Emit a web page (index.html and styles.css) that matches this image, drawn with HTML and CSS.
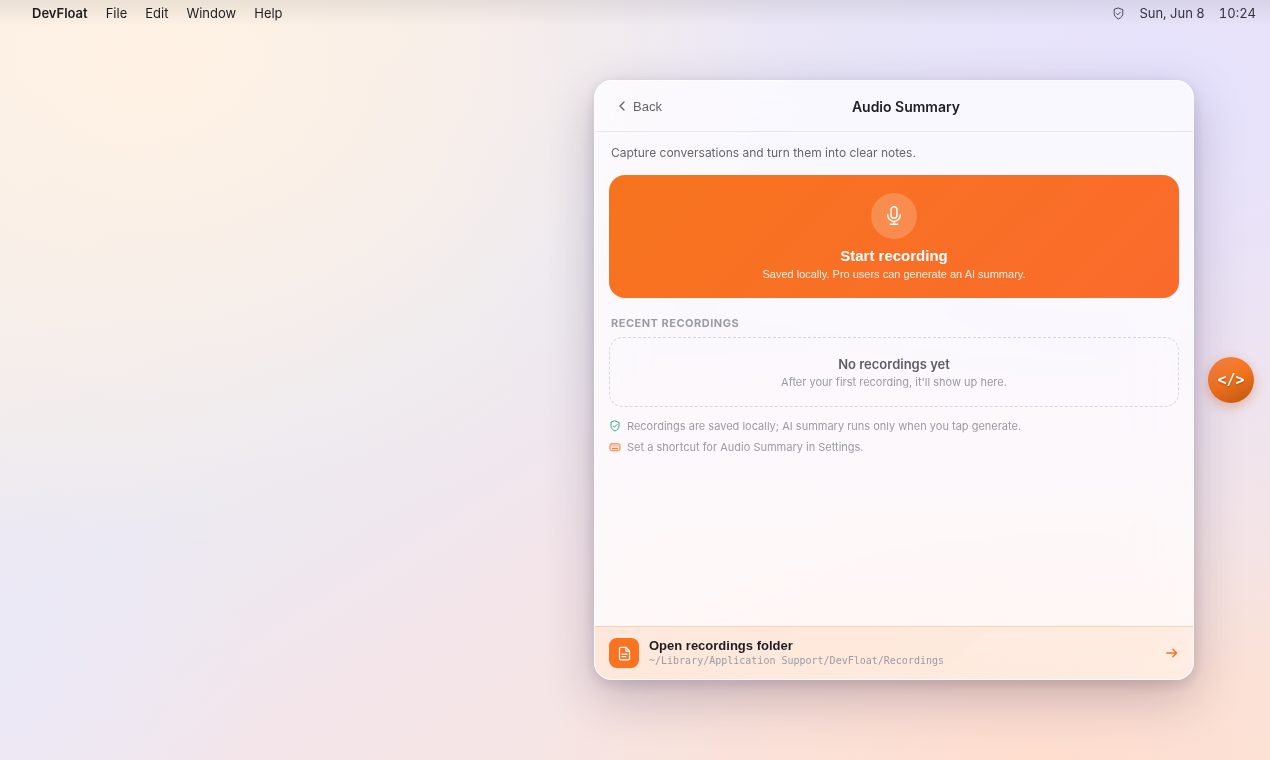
FILE: index.html
```html
<!DOCTYPE html>
<html lang="en">
<head>
<meta charset="utf-8">
<title>DevFloat – Audio Summary</title>
<link rel="stylesheet" href="styles.css">
</head>
<body>
<svg class="sprite" aria-hidden="true">
  <symbol id="shield" viewBox="0 0 24 24"><path d="M12 2 20 5v6.500c0 5-3.200 8.500-8 10.500-4.800-2-8-5.500-8-10.500V5z"/><path d="m8.500 12 2.500 2.200 4.500-4.700"/></symbol>
  <symbol id="mic" viewBox="0 0 24 24"><rect x="8.500" y="1" width="7" height="13.500" rx="3.500"/><path d="M4.500 10.500v.5a7.500 7.500 0 0 0 15 0v-.5M12 18.500V22M7.500 22h9"/></symbol>
  <symbol id="doc" viewBox="0 0 24 24"><path d="M14 2H6a2 2 0 0 0-2 2v16a2 2 0 0 0 2 2h12a2 2 0 0 0 2-2V8z"/><path d="M14 2v6h6M8 13h8M8 17h6"/></symbol>
</svg>
<div class="desktop">
  <header class="menubar">
    <nav class="menus" aria-label="Menu bar">
      <strong class="app-name">DevFloat</strong>
      <span>File</span><span>Edit</span><span>Window</span><span>Help</span>
    </nav>
    <div class="status">
      <svg class="icon status-icon" aria-hidden="true"><use href="#shield"/></svg>
      <span>Sun, Jun 8</span>
      <time>10:24</time>
    </div>
  </header>

  <main class="stage">
    <section class="panel">
      <header class="panel-head">
        <button class="back" type="button">
          <svg class="icon back-icon" viewBox="0 0 24 24" aria-hidden="true"><path d="m15 18-6-6 6-6"/></svg>
          Back
        </button>
        <h1 class="panel-title">Audio Summary</h1>
        <span class="head-spacer"></span>
      </header>

      <div class="panel-body">
        <p class="intro">Capture conversations and turn them into clear notes.</p>
        <button class="record" type="button">
          <span class="record-badge"><svg class="icon mic-icon" aria-hidden="true"><use href="#mic"/></svg></span>
          <span class="record-title">Start recording</span>
          <span class="record-sub">Saved locally. Pro users can generate an AI summary.</span>
        </button>
        <h2 class="section-label">Recent recordings</h2>
        <div class="empty">
          <p class="empty-title">No recordings yet</p>
          <p class="empty-sub">After your first recording, it'll show up here.</p>
        </div>
        <ul class="hints">
          <li class="hint"><svg class="icon hint-icon safe" aria-hidden="true"><use href="#shield"/></svg>Recordings are saved locally; AI summary runs only when you tap generate.</li>
          <li class="hint"><svg class="icon hint-icon keys" viewBox="0 0 24 24" aria-hidden="true"><rect class="key-plate" x="2" y="5.500" width="20" height="14" rx="3"/><path d="M6 9.500h.1M10 9.500h.1M14 9.500h.1M18 9.500h.1M7 15h10"/></svg>Set a shortcut for Audio Summary in Settings.</li>
        </ul>
      </div>

      <button class="folder" type="button">
        <span class="folder-badge"><svg class="icon doc-icon" aria-hidden="true"><use href="#doc"/></svg></span>
        <span class="folder-text">
          <span class="folder-title">Open recordings folder</span>
          <span class="folder-path">~/Library/Application Support/DevFloat/Recordings</span>
        </span>
        <svg class="icon arrow-icon" viewBox="0 0 24 24" aria-hidden="true"><path d="M3 12h17M13.500 5.500 20 12l-6.500 6.500"/></svg>
      </button>
    </section>
    <button class="float" type="button">&lt;/&gt;</button>
  </main>
</div>
</body>
</html>
```
FILE: styles.css
```css
* { box-sizing: border-box; }

body {
  margin: 0;
  font-family: Inter, "Liberation Sans", sans-serif;
  color: #1d1d22;
}

h1, h2, p, ul { margin: 0; padding: 0; }
button { border: 0; background: none; cursor: pointer; font-family: "Liberation Sans", Arial, sans-serif; }

.sprite { position: absolute; width: 0; height: 0; }

.icon {
  flex: none;
  fill: none;
  stroke: currentColor;
  stroke-width: 2;
  stroke-linecap: round;
  stroke-linejoin: round;
}

.desktop {
  display: flex;
  flex-direction: column;
  min-height: 100vh;
  background:
    radial-gradient(ellipse 50% 65% at 12% 8%, #fff2e4, rgba(255, 242, 228, 0)),
    radial-gradient(ellipse 60% 75% at 92% 14%, #e6e2fd, rgba(230, 226, 253, 0)),
    radial-gradient(ellipse 40% 35% at 82% 100%, #ffddcf, rgba(255, 221, 207, 0)),
    radial-gradient(ellipse 20% 35% at 0% 88%, rgba(235, 232, 248, 0.8), rgba(235, 232, 248, 0)),
    linear-gradient(148deg, #f6eeea 0%, #ebe9f2 40%, #f3e5ea 58%, #f7e5e2 76%, #f8e5dc 100%);
}

.menubar {
  display: flex;
  justify-content: space-between;
  align-items: center;
  height: 26px;
  padding: 0 14px 0 32px;
  font-size: 13px;
  background: linear-gradient(rgba(0, 0, 0, 0.07), rgba(0, 0, 0, 0));
}
.menus { display: flex; gap: 18px; }
.app-name { font-weight: 600; }
.status { display: flex; align-items: center; gap: 14px; color: #33323c; font-variant-numeric: tabular-nums; }
.status-icon { width: 13px; height: 13px; stroke-width: 1.6; }

.stage {
  flex: 1;
  display: flex;
  align-items: center;
  justify-content: flex-end;
  gap: 14px;
  padding: 0 16px 26px;
}

.panel {
  display: flex;
  flex-direction: column;
  width: 100%;
  max-width: 600px;
  min-height: 600px;
  overflow: hidden;
  border: 1px solid rgba(255, 255, 255, 0.85);
  border-radius: 18px;
  background: rgba(255, 255, 255, 0.74);
  backdrop-filter: blur(24px) saturate(150%);
  box-shadow: 0 18px 50px rgba(40, 20, 60, 0.24), 0 4px 14px rgba(40, 20, 60, 0.14);
}

.panel-head {
  display: flex;
  align-items: center;
  height: 51px;
  padding: 0 14px;
  border-bottom: 1px solid rgba(30, 30, 60, 0.08);
}
.back {
  display: flex;
  align-items: center;
  gap: 3px;
  padding: 5px;
  font-size: 13px;
  color: #65656f;
}
.back-icon { width: 16px; height: 16px; }
.panel-title { flex: 1; text-align: center; font-size: 14px; font-weight: 600; }
.head-spacer { width: 34px; }

.panel-body { flex: 1; padding: 12px 14px; }

.intro { padding: 0 2px; font-size: 12px; line-height: 18px; color: #65656f; }

.record {
  display: flex;
  flex-direction: column;
  align-items: center;
  width: 100%;
  margin-top: 13px;
  padding: 18px 16px 15px;
  border-radius: 16px;
  color: #fff;
  background: linear-gradient(135deg, #f7741e, #fa6b2c);
}
.record-badge {
  display: grid;
  place-items: center;
  width: 46px;
  height: 46px;
  margin-bottom: 8px;
  border-radius: 50%;
  background: rgba(255, 255, 255, 0.2);
}
.mic-icon { width: 20px; height: 20px; stroke-width: 1.8; }
.record-title { font-size: 15px; line-height: 18px; font-weight: 700; }
.record-sub { font-size: 11px; line-height: 18px; opacity: 0.88; }

.section-label {
  margin: 17px 2px 6px;
  font-size: 11px;
  line-height: 16px;
  font-weight: 700;
  letter-spacing: 0.5px;
  text-transform: uppercase;
  color: #9b9ba5;
}

.empty {
  padding: 17px 16px 15px;
  border: 1px dashed rgba(60, 60, 80, 0.18);
  border-radius: 14px;
  text-align: center;
}
.empty-title { font-size: 13px; line-height: 18px; font-weight: 600; color: #5e5e68; }
.empty-sub { font-size: 11px; line-height: 18px; color: #9b9ba5; }

.hints { display: grid; gap: 5px; margin-top: 11px; list-style: none; }
.hint {
  display: flex;
  align-items: center;
  gap: 6px;
  font-size: 11px;
  line-height: 16px;
  color: #9b9ba5;
}
.hint-icon { width: 12px; height: 12px; }
.safe { color: #35a67c; }
.keys { color: #f97f3a; }
.key-plate { fill: rgba(249, 115, 22, 0.2); }

.folder {
  display: flex;
  align-items: center;
  gap: 10px;
  padding: 11px 14px;
  border-top: 1px solid #fdd0b5;
  text-align: left;
  color: #1d1d22;
  background: linear-gradient(135deg, rgba(249, 115, 22, 0.13), rgba(249, 115, 22, 0.08));
}
.folder-badge {
  display: grid;
  place-items: center;
  width: 30px;
  height: 30px;
  border-radius: 8px;
  color: #fff;
  background: #f97320;
}
.doc-icon { width: 15px; height: 15px; }
.folder-text { flex: 1; display: grid; }
.folder-title { font-size: 13px; line-height: 16px; font-weight: 700; }
.folder-path { font-family: "DejaVu Sans Mono", monospace; font-size: 10px; line-height: 14px; color: #9b9ba5; }
.arrow-icon { width: 14px; height: 14px; color: #f97320; stroke-width: 2.5; }

.float {
  display: grid;
  place-items: center;
  flex: none;
  width: 46px;
  height: 46px;
  padding: 0;
  border-radius: 50%;
  font-family: "DejaVu Sans Mono", monospace;
  font-size: 15px;
  font-weight: 700;
  color: #fff;
  text-shadow: 0 1px 2px rgba(0, 0, 0, 0.3);
  background: linear-gradient(150deg, #f98748, #f4731c 50%, #b85410);
  box-shadow: 0 4px 12px rgba(200, 90, 30, 0.35);
}
```
